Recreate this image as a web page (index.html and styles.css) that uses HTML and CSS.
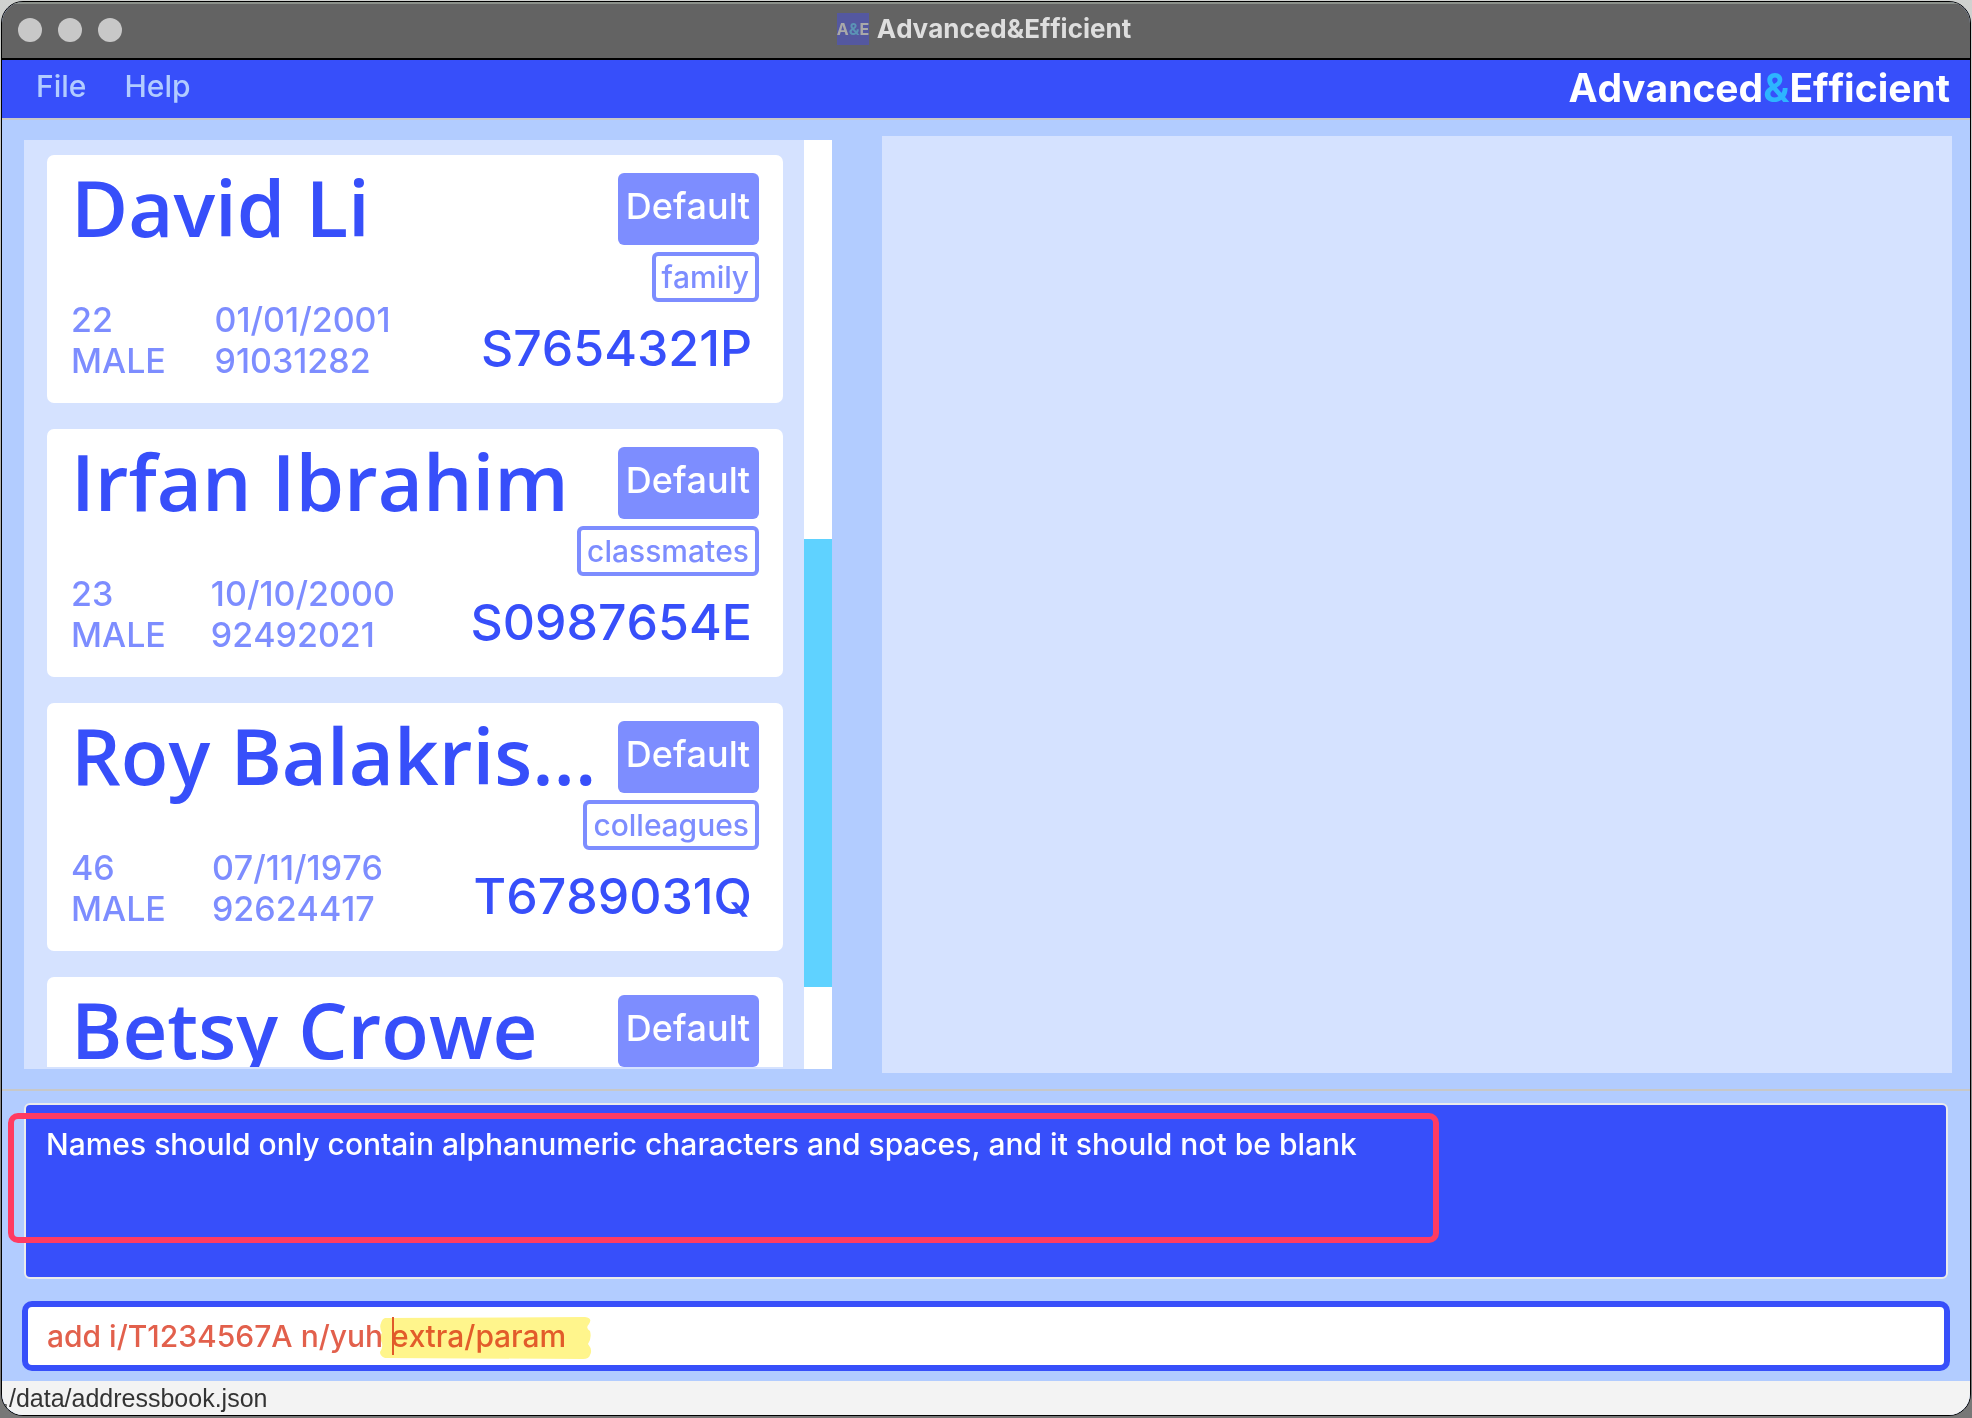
FILE: index.html
```html
<!DOCTYPE html>
<html lang="en">
<head>
<meta charset="utf-8">
<title>Advanced&amp;Efficient</title>
<link rel="stylesheet" href="styles.css">
</head>
<body>
<div class="window">
  <header class="titlebar">
    <div class="lights"><span class="light"></span><span class="light"></span><span class="light"></span></div>
    <div class="title"><span class="app-icon">A<span class="app-icon-amp">&amp;</span>E</span><span>Advanced&amp;Efficient</span></div>
  </header>
  <nav class="menubar">
    <button class="menu" type="button">File</button>
    <button class="menu" type="button">Help</button>
    <div class="brand">Advanced<span class="brand-amp">&amp;</span>Efficient</div>
  </nav>
  <main class="split">
    <section class="list-panel">
      <div class="cards">
        <article class="card">
          <div class="card-top">
            <h2 class="name">David Li</h2>
            <div class="badges"><span class="priority">Default</span><span class="tag">family</span></div>
          </div>
          <div class="card-bottom">
            <div class="facts"><div>22<br>MALE</div><div>01/01/2001<br>91031282</div></div>
            <div class="nric">S7654321P</div>
          </div>
        </article>
        <article class="card">
          <div class="card-top">
            <h2 class="name">Irfan Ibrahim</h2>
            <div class="badges"><span class="priority">Default</span><span class="tag">classmates</span></div>
          </div>
          <div class="card-bottom">
            <div class="facts"><div>23<br>MALE</div><div>10/10/2000<br>92492021</div></div>
            <div class="nric">S0987654E</div>
          </div>
        </article>
        <article class="card">
          <div class="card-top">
            <h2 class="name">Roy Balakris...</h2>
            <div class="badges"><span class="priority">Default</span><span class="tag">colleagues</span></div>
          </div>
          <div class="card-bottom">
            <div class="facts"><div>46<br>MALE</div><div>07/11/1976<br>92624417</div></div>
            <div class="nric">T6789031Q</div>
          </div>
        </article>
        <article class="card">
          <div class="card-top">
            <h2 class="name">Betsy Crowe</h2>
            <div class="badges"><span class="priority">Default</span></div>
          </div>
        </article>
      </div>
      <div class="scrollbar"><div class="thumb"></div></div>
    </section>
    <section class="detail-panel"></section>
  </main>
  <section class="console">
    <div class="result">Names should only contain alphanumeric characters and spaces, and it should not be blank
      <div class="callout"></div>
    </div>
    <div class="command">
      <input class="command-input" type="text" aria-label="Command" value="add i/T1234567A n/yuh extra/param">
      <svg class="marker" width="212" height="42" viewBox="0 0 212 42"><path d="M5 1 L205 0 Q213 1 209 7 Q205 11 210 14 Q212 21 208 27 Q213 33 210 38 Q209 42 203 42 L5 41 Q0 39 0 35 Q4 29 1 24 Q-1 20 2 16 Q-1 10 1 6 Q2 2 5 1Z"/></svg>
      <span class="caret"></span>
    </div>
  </section>
  <footer class="status">./data/addressbook.json</footer>
</div>
</body>
</html>
```
FILE: styles.css
```css
* { box-sizing: border-box; }
body {
  margin: 0;
  padding: 1px 1px 2px;
  height: 100vh;
  background: linear-gradient(#d0d2d0, #777);
  font-family: Inter, sans-serif;
  font-kerning: none;
}
.window {
  display: flex;
  flex-direction: column;
  height: 100%;
  border: 1px solid #000;
  border-radius: 22px;
  overflow: hidden;
  background: #b2ccff;
}
.titlebar {
  display: flex;
  align-items: center;
  height: 58px;
  padding: 0 20px 4px 16px;
  border-top: 2px solid #8b908a;
  border-bottom: 2px solid #000;
  background: #636363;
}
.lights { display: flex; gap: 16px; flex: 1; padding-top: 2px; }
.light { width: 24px; height: 24px; border-radius: 50%; background: #c8c8c8; }
.title {
  display: flex;
  align-items: center;
  gap: 8px;
  color: #dedede;
  font-size: 26px;
  font-weight: 700;
  line-height: 32px;
}
.titlebar::after { content: ""; flex: 1; }
.app-icon {
  width: 32px;
  background: #5458a0;
  color: #a9a9a9;
  font-size: 16px;
  text-align: center;
}
.app-icon-amp { color: #5b93b5; }
.menubar {
  display: flex;
  align-items: center;
  height: 60px;
  padding: 0 20px 2px 15px;
  border-bottom: 2px solid #c8c8c8;
  background: #374ffa;
}
.menu {
  margin: 0;
  padding: 0 19px 4px;
  border: 0;
  background: none;
  color: #b2ccff;
  font: 500 30px/36px Inter, sans-serif;
  font-kerning: none;
}
.brand { margin-left: auto; color: #fff; font-size: 39px; font-weight: 700; line-height: 48px; }
.brand-amp { color: #2db5ff; }
.split {
  flex: 1;
  min-height: 0;
  display: grid;
  grid-template-columns: 808fr 1070fr;
  grid-template-rows: 100%;
  gap: 50px;
  padding: 16px 18px 16px 22px;
  border-bottom: 2px solid #c8c8c8;
}
.list-panel { display: flex; margin: 4px 0; background: #d5e2ff; overflow: hidden; }
.cards {
  flex: 1;
  min-width: 0;
  display: flex;
  flex-direction: column;
  gap: 26px;
  margin-bottom: 2px;
  padding: 15px 21px 0 23px;
  overflow: hidden;
}
.card {
  flex: none;
  height: 248px;
  padding: 0 24px;
  border-radius: 7px;
  background: #fff;
}
.card-top { display: flex; height: 129px; }
.name {
  flex: 1;
  min-width: 0;
  margin: 0;
  color: #374ffa;
  font: 600 78px/104px "Open Sans", sans-serif;
  white-space: nowrap;
}
.badges { display: flex; flex-direction: column; align-items: flex-end; gap: 7px; padding-top: 18px; }
.priority {
  flex: none;
  height: 72px;
  padding: 0 9px 0 8px;
  border-radius: 6px;
  background: #7d8dff;
  color: #fff;
  font-size: 36px;
  font-weight: 500;
  line-height: 66px;
}
.tag {
  flex: none;
  height: 50px;
  padding: 0 6px;
  border: 4px solid #7d8dff;
  border-radius: 6px;
  color: #7d8dff;
  font-size: 30px;
  font-weight: 500;
  line-height: 42px;
}
.card-bottom { display: flex; }
.facts {
  flex: 1;
  display: grid;
  grid-template-columns: 35% 65%;
  padding-top: 15px;
  color: #7d8dff;
  font-size: 34px;
  font-weight: 500;
  line-height: 41px;
}
.nric { padding: 34px 7px 0 0; color: #374ffa; font-size: 50px; font-weight: 500; line-height: 60px; }
.scrollbar { width: 28px; padding: 399px 0 82px; background: #fff; }
.thumb { height: 100%; background: #5fd2ff; }
.detail-panel { background: #d5e2ff; }
.console { display: flex; flex-direction: column; gap: 22px; padding: 12px 20px 10px; }
.result {
  position: relative;
  min-height: 176px;
  margin: 0 2px;
  padding: 19px 20px;
  border: 2px solid #ebebeb;
  border-radius: 6px;
  background: #374ffa;
  color: #fff;
  font-size: 30px;
  font-weight: 500;
  line-height: 40px;
}
.callout {
  position: absolute;
  left: -18px;
  top: 8px;
  width: 1431px;
  height: 130px;
  border: 6px solid #ff3b62;
  border-radius: 10px;
}
.command { position: relative; display: flex; }
.command-input {
  flex: 1;
  height: 70px;
  padding: 0 19px;
  border: 6px solid #374ffa;
  border-radius: 10px;
  outline: 0;
  background: #fff;
  color: #e2604c;
  font: 500 30px/40px Inter, sans-serif;
  font-kerning: none;
}
.marker { position: absolute; left: 358px; top: 16px; fill: #fff58c; mix-blend-mode: multiply; }
.caret { position: absolute; left: 370px; top: 16px; width: 2px; height: 38px; background: #e05a2a; }
.status {
  height: 34px;
  background: #f3f3f3;
  color: #333;
  font: 25px/34px "Liberation Sans", sans-serif;
}
```
